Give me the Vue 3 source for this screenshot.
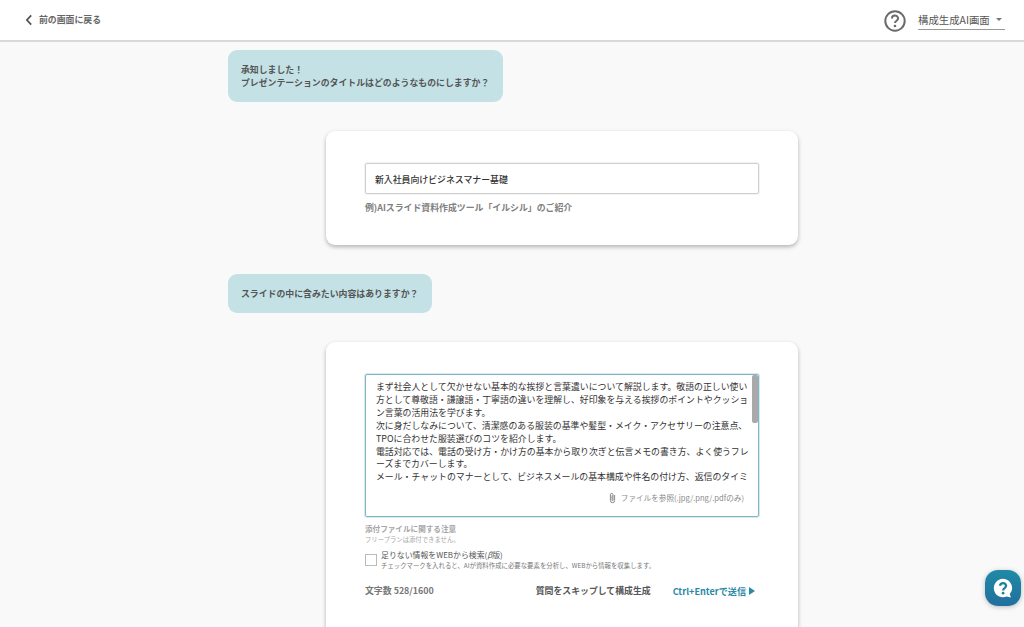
<script setup>
const lines = [
  'まず社会人として欠かせない基本的な挨拶と言葉遣いについて解説します。敬語の正しい使い',
  '方として尊敬語・謙譲語・丁寧語の違いを理解し、好印象を与える挨拶のポイントやクッショ',
  'ン言葉の活用法を学びます。',
  '次に身だしなみについて、清潔感のある服装の基準や髪型・メイク・アクセサリーの注意点、',
  'TPOに合わせた服装選びのコツを紹介します。',
  '電話対応では、電話の受け方・かけ方の基本から取り次ぎと伝言メモの書き方、よく使うフレ',
  'ーズまでカバーします。',
  'メール・チャットのマナーとして、ビジネスメールの基本構成や件名の付け方、返信のタイミ'
]
</script>

<template>
  <div class="page">
    <header class="header">
      <a class="back">
        <svg class="chev" width="8" height="12" viewBox="0 0 8 12"><path d="M6.2 1.4 1.9 6l4.3 4.6" fill="none" stroke="#555" stroke-width="1.8" /></svg>
        <span>前の画面に戻る</span>
      </a>
      <div class="right">
        <svg class="help" width="22" height="22" viewBox="0 0 22 22">
          <circle cx="11" cy="11" r="9.7" fill="none" stroke="#6a6a6a" stroke-width="2" />
          <path d="M7.9 8.6a3.1 3.1 0 0 1 6.2 0c0 2.1-3.1 2.2-3.1 4.5" fill="none" stroke="#6a6a6a" stroke-width="2" />
          <circle cx="11" cy="16" r="1.3" fill="#6a6a6a" />
        </svg>
        <div class="select">
          <span>構成生成AI画面</span>
          <i class="caret"></i>
        </div>
      </div>
    </header>

    <main class="main">
      <div class="column">
        <div class="bubble first">承知しました！<br />プレゼンテーションのタイトルはどのようなものにしますか？</div>
        <section class="card title-card">
          <div class="input">新入社員向けビジネスマナー基礎</div>
          <p class="example">例)AIスライド資料作成ツール「イルシル」のご紹介</p>
        </section>
        <div class="bubble second">スライドの中に含みたい内容はありますか？</div>
        <section class="card body-card">
          <div class="textarea">
            <div class="text">
              <div v-for="line in lines" :key="line" class="line">{{ line }}</div>
            </div>
            <div class="thumb"></div>
            <div class="attach">
              <svg width="9" height="12" viewBox="0 0 9 12"><path d="M6.6 3v5.6a2.1 2.1 0 0 1-4.2 0V2.7a1.3 1.3 0 0 1 2.6 0v5.5a.5.5 0 0 1-1 0V3.4" fill="none" stroke="#8a8a8a" stroke-width="1" /></svg>
              <span>ファイルを参照(.jpg/.png/.pdfのみ)</span>
            </div>
          </div>
          <p class="note-title">添付ファイルに関する注意</p>
          <p class="note">フリープランは添付できません。</p>
          <div class="check-row">
            <span class="box"></span>
            <div>
              <p class="check-label">足りない情報をWEBから検索(<em>β</em>版)</p>
              <p class="check-help">チェックマークを入れると、AIが資料作成に必要な要素を分析し、WEBから情報を収集します。</p>
            </div>
          </div>
          <div class="actions">
            <span class="count">文字数 528/1600</span>
            <span class="skip">質問をスキップして構成生成</span>
            <span class="send">Ctrl+Enterで送信<i class="tri"></i></span>
          </div>
        </section>
      </div>
    </main>

    <button class="fab" aria-label="ヘルプ">
      <svg width="24" height="24" viewBox="0 0 26 26">
        <path d="M13 3a10 10 0 1 0 4 19.2l4.6 1-1.3-3.6A10 10 0 0 0 13 3Z" fill="#fff" />
        <path d="M9.7 10.6a3.4 3.4 0 0 1 6.7 0c0 2.4-3.3 2.5-3.3 5" fill="none" stroke="#1f7f9f" stroke-width="2.4" />
        <circle cx="13.1" cy="18.6" r="1.5" fill="#1f7f9f" />
      </svg>
    </button>
  </div>
</template>

<style>
html, body { margin: 0; overflow: hidden; background: #f9f9f9; }
</style>

<style scoped>
.page {
  position: relative;
  height: 627px;
  overflow: hidden;
  background: #f9f9f9;
  color: #4a4a4a;
  font-family: "Noto Sans CJK JP", "Noto Sans", sans-serif;
  font-size: 8.9px;
}
p { margin: 0; }
.header {
  box-sizing: border-box;
  height: 42px;
  background: #fff;
  border-bottom: 2px solid #d9d9d9;
  display: flex;
  align-items: center;
  justify-content: space-between;
  padding: 0 19px 1px 25px;
}
.back {
  display: flex;
  align-items: center;
  gap: 6px;
  color: #666;
  font-weight: 700;
}
.right { display: flex; align-items: center; gap: 12px; }
.help { margin-top: 2px; }
.select {
  box-sizing: border-box;
  width: 87px;
  height: 20px;
  border-bottom: 1px solid #999;
  display: flex;
  align-items: center;
  justify-content: space-between;
  font-size: 10.4px;
  color: #555;
  padding-right: 3px;
}
.caret {
  width: 0;
  height: 0;
  border-left: 3.5px solid transparent;
  border-right: 3.5px solid transparent;
  border-top: 3.5px solid #777;
}
.main { display: flex; justify-content: center; padding-left: 2px; }
.column { width: 570px; display: flex; flex-direction: column; align-items: flex-start; }
.bubble {
  box-sizing: border-box;
  background: #c4e2e6;
  border-radius: 9px;
  padding: 13px;
  font-weight: 700;
  line-height: 13px;
  color: #555;
}
.first { margin-top: 8px; width: 275px; height: 52px; }
.second { margin-top: 29px; width: 204px; height: 39px; padding-top: 13px; }
.card {
  box-sizing: border-box;
  width: 472px;
  margin-left: 98px;
  background: #fff;
  border-radius: 9px;
  box-shadow: 0 2px 4px rgba(0, 0, 0, 0.28);
  padding: 32px 39px 0;
}
.title-card { margin-top: 29px; height: 114px; }
.input {
  box-sizing: border-box;
  height: 31px;
  border: 1px solid #cfcfcf;
  border-radius: 2px;
  box-shadow: 0 0 0 1px rgba(207, 207, 207, 0.25);
  padding: 0 9px;
  line-height: 31px;
  font-weight: 500;
  color: #333;
}
.example { margin-top: 7px; font-weight: 700; color: #808080; line-height: 13px; }
.body-card { margin-top: 29px; height: 320px; }
.textarea {
  position: relative;
  box-sizing: border-box;
  height: 143px;
  border: 1px solid #7fb7c6;
  border-radius: 2px;
  box-shadow: 0 0 0 1px rgba(127, 183, 198, 0.3);
  padding: 6px 0 0 10px;
  color: #333;
  line-height: 12.9px;
}
.line { white-space: nowrap; }
.thumb {
  position: absolute;
  top: 0;
  right: 0;
  width: 6px;
  height: 48px;
  border-radius: 2px;
  background: #a9a9a9;
}
.attach {
  position: absolute;
  right: 14px;
  bottom: 12px;
  display: flex;
  align-items: center;
  gap: 4px;
  font-size: 7.6px;
  line-height: 12px;
  color: #8a8a8a;
}
.note-title { margin-top: 6px; font-size: 7.6px; font-weight: 700; color: #a6a6a6; line-height: 11px; }
.note { margin-top: 1px; font-size: 6.35px; color: #a6a6a6; line-height: 10px; }
.check-row { display: flex; align-items: center; gap: 4px; margin-top: 4px; }
.box {
  box-sizing: border-box;
  width: 12px;
  height: 12px;
  border: 1px solid #bbb;
  background: #fff;
}
.check-label { font-size: 7.9px; color: #555; line-height: 12px; }
.check-help { font-size: 6.4px; color: #777; line-height: 10px; }
.actions {
  display: flex;
  align-items: center;
  margin-top: 13px;
  font-weight: 700;
  line-height: 14px;
}
.count { color: #777; }
.skip { margin-left: auto; color: #555; }
.send { margin-left: 22px; margin-right: 4px; font-size: 9.1px; color: #2a8aa5; display: flex; align-items: center; gap: 3px; }
.tri {
  width: 0;
  height: 0;
  border-top: 4px solid transparent;
  border-bottom: 4px solid transparent;
  border-left: 6px solid #2a8aa5;
}
.fab {
  position: absolute;
  right: 3px;
  top: 570px;
  width: 36px;
  height: 36px;
  padding: 0;
  border: 0;
  border-radius: 13px;
  background: linear-gradient(#1f8aa6, #226f9e);
  box-shadow: 0 1px 5px rgba(0, 0, 0, 0.25);
  display: flex;
  align-items: center;
  justify-content: center;
}
</style>
